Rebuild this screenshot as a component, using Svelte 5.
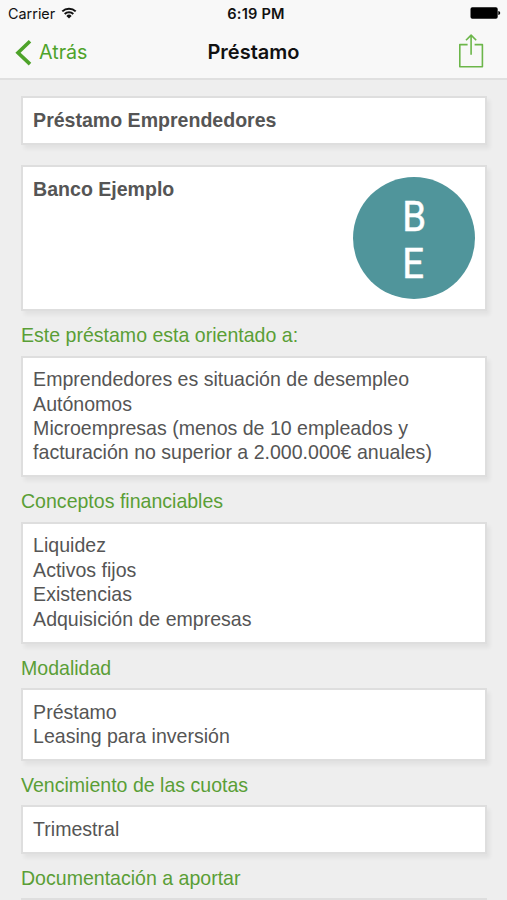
<script>
  const sections = [
    {
      title: 'Este préstamo esta orientado a:',
      items: [
        'Emprendedores es situación de desempleo',
        'Autónomos',
        'Microempresas (menos de 10 empleados y facturación no superior a 2.000.000€ anuales)'
      ]
    },
    {
      title: 'Conceptos financiables',
      items: ['Liquidez', 'Activos fijos', 'Existencias', 'Adquisición de empresas']
    },
    { title: 'Modalidad', items: ['Préstamo', 'Leasing para inversión'] },
    { title: 'Vencimiento de las cuotas', items: ['Trimestral'] },
    { title: 'Documentación a aportar', items: [''] }
  ];
</script>

<div class="screen">
  <header>
    <div class="status-bar">
      <div class="carrier">
        <span>Carrier</span>
        <svg width="16" height="12" viewBox="0 0 16 12" aria-hidden="true">
          <path d="M1.3 4.4a9.6 9.6 0 0 1 13.4 0" />
          <path d="M3.7 7a6.2 6.2 0 0 1 8.6 0" />
          <path class="dot" d="M8 11.6 5.4 8.9a3.7 3.7 0 0 1 5.2 0z" />
        </svg>
      </div>
      <span class="time">6:19 PM</span>
      <div class="battery">
        <svg width="31" height="12" viewBox="0 0 31 12" aria-hidden="true">
          <rect x="0.5" y="0.3" width="27.2" height="11.4" rx="1.8" />
          <path d="M28.3 4.1c1.3.2 1.9.9 1.9 1.9s-.6 1.7-1.9 1.9z" />
        </svg>
      </div>
    </div>

    <nav>
      <button class="back">
        <svg width="17" height="26" viewBox="0 0 17 26" aria-hidden="true">
          <path d="M15 1.3 3 12.7l12 11.4" />
        </svg>
        <span>Atrás</span>
      </button>
      <h1>Préstamo</h1>
      <button class="share" aria-label="Compartir">
        <svg width="26" height="36" viewBox="0 0 26 36" aria-hidden="true">
          <path d="M9.6 11.6H1.8v22.1h22.6V11.6h-7.8" />
          <path d="M13.1 21.8V2.2M8 7.3l5.1-5.2 5.1 5.2" />
        </svg>
      </button>
    </nav>
  </header>

  <main>
    <div class="card name">Préstamo Emprendedores</div>

    <div class="card bank">
      <span>Banco Ejemplo</span>
      <div class="logo">
        <span>B</span>
        <span>E</span>
      </div>
    </div>

    {#each sections as section}
      <h2>{section.title}</h2>
      <div class="card">
        {#each section.items as item}
          <p>{item}</p>
        {/each}
      </div>
    {/each}
  </main>
</div>

<style>
  :global(body) {
    background: #eeeeee;
    overflow: hidden;
  }

  .screen {
    height: 900px;
    overflow: hidden;
    background: #eeeeee;
    color: #555;
    font-family: "Liberation Sans", Arial, sans-serif;
    font-size: 19.56px;
    line-height: 24.4px;
  }

  header {
    box-sizing: border-box;
    height: 80px;
    background: #f8f8f8;
    border-bottom: 2px solid #e0e0e0;
    color: #111;
    font-family: Inter, Roboto, sans-serif;
  }

  .status-bar {
    display: grid;
    grid-template-columns: 1fr auto 1fr;
    align-items: center;
    height: 27px;
    padding: 0 6px 0 8px;
    font-size: 14.4px;
    line-height: 27px;
  }

  .carrier {
    display: flex;
    align-items: center;
    gap: 6px;
  }

  .carrier svg {
    margin-top: -1px;
    fill: none;
    stroke: #111;
    stroke-width: 2;
  }

  .carrier .dot {
    fill: #111;
    stroke: none;
  }

  .time {
    padding: 1px 0 0 3px;
    font-size: 14.6px;
    font-weight: 600;
    letter-spacing: 0.2px;
    line-height: 26px;
  }

  .battery {
    display: flex;
    justify-content: flex-end;
    margin-top: -1px;
  }

  nav {
    display: grid;
    grid-template-columns: 1fr auto 1fr;
    align-items: center;
    height: 51px;
    padding: 0 23px 0 15px;
  }

  button {
    display: flex;
    align-items: center;
    padding: 0;
    border: none;
    background: none;
    color: #4ea32a;
    font: inherit;
  }

  button svg {
    fill: none;
    stroke: currentColor;
  }

  .back {
    gap: 7px;
    font-size: 19.7px;
  }

  .back svg {
    stroke-width: 3.6;
  }

  .share {
    justify-self: end;
    margin-bottom: 3px;
  }

  .share svg {
    stroke: #6cb64a;
    stroke-width: 1.6;
    stroke-linejoin: round;
  }

  h1 {
    margin: 0;
    padding-left: 8px;
    font-size: 20px;
    font-weight: 600;
  }

  main {
    padding: 16px 20px 0 21px;
  }

  .card {
    padding: 9.6px 10.1px 10.6px;
    border: 2px solid #dedede;
    background: #fff;
    box-shadow: 3px 4px 4px rgba(0, 0, 0, 0.05);
  }

  .name,
  .bank {
    font-weight: bold;
  }

  .bank {
    display: flex;
    justify-content: space-between;
    margin-top: 20.4px;
  }

  .logo {
    display: flex;
    flex-direction: column;
    align-items: center;
    justify-content: center;
    box-sizing: border-box;
    width: 122px;
    height: 122px;
    padding-top: 4px;
    border-radius: 50%;
    background: #50959b;
    color: #fff;
    font-family: Roboto, sans-serif;
    font-size: 42.5px;
    font-weight: 400;
    line-height: 47px;
    -webkit-text-stroke: 0.5px #fff;
  }

  .logo span {
    width: 26px;
    transform: scaleX(0.9);
  }

  h2 {
    height: 34.4px;
    margin: 0;
    padding-top: 10px;
    box-sizing: content-box;
    color: #5a9e36;
    font-size: 19.56px;
    font-weight: normal;
    line-height: 28px;
  }

  p {
    min-height: 24.4px;
    margin: 0;
  }
</style>
